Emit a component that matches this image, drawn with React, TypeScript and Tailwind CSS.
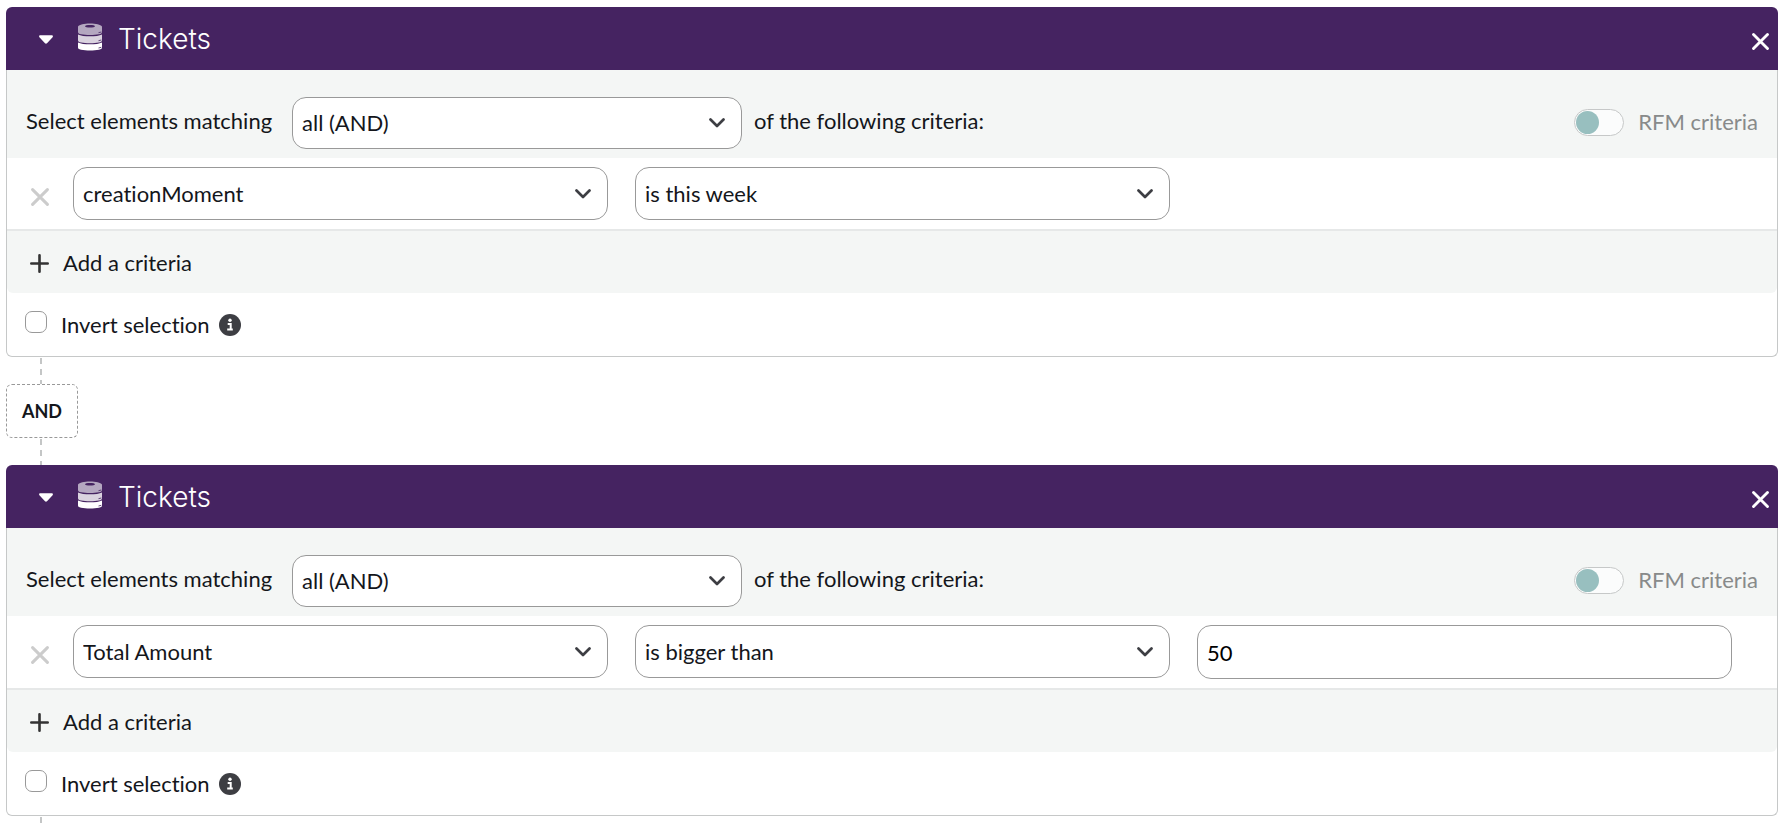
import { useId, useState } from "react";

type Option = { value: string; label: string };

type Criterion = {
  field: string;
  operator: string;
  value?: string;
};

const FIELDS: Option[] = [
  { value: "creationMoment", label: "creationMoment" },
  { value: "totalAmount", label: "Total Amount" },
];

const OPERATORS: Option[] = [
  { value: "thisWeek", label: "is this week" },
  { value: "biggerThan", label: "is bigger than" },
];

const MATCHING: Option[] = [
  { value: "and", label: "all (AND)" },
  { value: "or", label: "any (OR)" },
];

function CrossIcon({ className }: { className: string }) {
  return (
    <svg viewBox="0 0 18 18" className={className} fill="none" stroke="currentColor" strokeWidth="3" strokeLinecap="round" aria-hidden="true">
      <path d="M1.6 1.6 16.4 16.4M16.4 1.6 1.6 16.4" />
    </svg>
  );
}

function CaretIcon() {
  return (
    <svg viewBox="0 0 14 9" className="h-[9px] w-3.5" fill="currentColor" aria-hidden="true">
      <path d="M1.3.2h11.4c1.1 0 1.6 1.2.9 2L8 8.2c-.6.6-1.5.6-2 0L.4 2.2C-.3 1.4.2.2 1.3.2Z" />
    </svg>
  );
}

function DatabaseIcon() {
  return (
    <svg viewBox="0 0 24 28" className="h-7 w-6" fill="currentColor" aria-hidden="true">
      <path
        opacity=".6"
        fillRule="evenodd"
        d="M0 3.600C1.500 1.500 6 .6 12 .6s10.500.9 12 3V9c0 1.300-1 1.900-3 2.300-2.600.5-5.700.7-9 .7s-6.400-.2-9-.7C1 10.900 0 10.300 0 9V3.600ZM7 3.200c0 .8 2.200 1.300 5 1.300s5-.5 5-1.300-2.200-1.300-5-1.300-5 .5-5 1.300Z"
      />
      <path opacity=".8" d="M0 11.400c2.500 1.300 7 1.800 12 1.800s9.500-.5 12-1.800v5.800c0 1.300-1 1.900-3 2.300-2.600.5-5.700.7-9 .7s-6.400-.2-9-.7c-2-.4-3-1-3-2.300v-5.800Z" />
      <path d="M0 19.400c2.500 1.300 7 1.800 12 1.800s9.500-.5 12-1.800v5.200c0 1.200-1 1.800-3 2.200-2.600.5-5.700.7-9 .7s-6.400-.2-9-.7c-2-.4-3-1-3-2.200v-5.200Z" />
      <path d="M20.500 9.700 23.300 9M20.500 17.700l2.800-.7M20.500 25l2.800-.7" fill="none" stroke="#452361" strokeWidth=".8" />
    </svg>
  );
}

function ChevronIcon() {
  return (
    <svg viewBox="0 0 16 10" className="h-2.5 w-4" fill="none" stroke="currentColor" strokeWidth="2.7" strokeLinecap="round" strokeLinejoin="round" aria-hidden="true">
      <path d="M1.5 1.5 8 8l6.5-6.5" />
    </svg>
  );
}

function PlusIcon() {
  return (
    <svg viewBox="0 0 19 19" className="size-[19px]" fill="none" stroke="currentColor" strokeWidth="2.6" strokeLinecap="round" aria-hidden="true">
      <path d="M9.5 1.3v16.4M1.3 9.5h16.4" />
    </svg>
  );
}

function InfoIcon() {
  return (
    <svg viewBox="0 0 22 22" className="size-[22px]" aria-hidden="true">
      <circle cx="11" cy="11" r="11" fill="#3d3e43" />
      <circle cx="11" cy="6.3" r="1.7" fill="#fff" />
      <path d="M8.7 9.9h3v5.4M8.2 15.5h5.6" fill="none" stroke="#fff" strokeWidth="2" />
    </svg>
  );
}

function Select({ id, label, options, initial, size }: { id?: string; label?: string; options: Option[]; initial: string; size: string }) {
  return (
    <div className={"grid items-center " + size}>
      <select
        id={id}
        aria-label={label}
        defaultValue={initial}
        className="col-start-1 row-start-1 h-full w-full appearance-none rounded-[14px] border border-[#999] bg-white pr-12 pl-[9px]"
      >
        {options.map((option) => (
          <option key={option.value} value={option.value}>
            {option.label}
          </option>
        ))}
      </select>
      <span className="pointer-events-none col-start-1 row-start-1 mr-[17px] justify-self-end text-[#3d3e43]">
        <ChevronIcon />
      </span>
    </div>
  );
}

function CriterionRow({ criterion }: { criterion: Criterion }) {
  return (
    <div className="flex items-center border-b-2 border-[#e6e8e8] bg-white py-[9px] pr-[45px]">
      <button type="button" aria-label="Remove criteria" className="flex w-[66px] shrink-0 pt-1.5 pl-6 text-[#ccc]">
        <CrossIcon className="size-[18px]" />
      </button>
      <div className="grid flex-1 grid-cols-3 gap-[27px]">
        <Select label="Field" options={FIELDS} initial={criterion.field} size="h-[53px]" />
        <Select label="Operator" options={OPERATORS} initial={criterion.operator} size="h-[53px]" />
        {criterion.value !== undefined && (
          <input
            type="text"
            aria-label="Value"
            defaultValue={criterion.value}
            className="h-[54px] w-full min-w-0 rounded-[14px] border border-[#999] bg-white px-[9px] text-black"
          />
        )}
      </div>
    </div>
  );
}

function FilterCard({ title, criterion }: { title: string; criterion: Criterion }) {
  const id = useId();
  const [open, setOpen] = useState(true);
  return (
    <section className="text-[#14161b]">
      <header className="flex h-[63px] items-center rounded-t-md bg-[#452361] pr-[9px] pl-[33px] text-white">
        <button type="button" aria-label="Toggle section" aria-expanded={open} onClick={() => setOpen(!open)} className="flex pt-0.5">
          <CaretIcon />
        </button>
        <span className="mr-4 ml-[25px] pb-1">
          <DatabaseIcon />
        </span>
        <h2 className="font-['Inter'] text-[28px] leading-9 font-light">{title}</h2>
        <button type="button" aria-label="Remove section" className="ml-auto flex pt-1.5">
          <CrossIcon className="size-[17px]" />
        </button>
      </header>
      {open && (
        <div className="rounded-b-md border border-t-0 border-[#c6c8c8] bg-white">
          <div className="flex items-center bg-[#f4f6f5] pt-[27px] pr-[19px] pb-[9px] pl-[19px]">
            <label htmlFor={id + "match"} className="min-w-[254px] pb-1">
              Select elements matching
            </label>
            <Select id={id + "match"} options={MATCHING} initial="and" size="mx-3 h-[52px] w-[450px]" />
            <span className="pb-1">of the following criteria:</span>
            <label className="ml-auto flex items-center pb-0.5 text-[#888a8a]">
              <input
                type="checkbox"
                role="switch"
                className="mr-3.5 flex h-[27px] w-[50px] appearance-none items-center rounded-full border border-[#c6c8c8] bg-[#fbfcfc] px-px before:size-[23px] before:rounded-full before:bg-[#98bfbf] checked:justify-end"
              />
              <span>RFM criteria</span>
            </label>
          </div>
          <CriterionRow criterion={criterion} />
          <button type="button" className="flex h-[62px] w-full items-center gap-3.5 rounded-b-md bg-[#f4f6f5] pt-0.5 pl-[23px]">
            <span className="text-[#333]">
              <PlusIcon />
            </span>
            Add a criteria
          </button>
          <div className="flex h-[63px] items-center pl-[18px]">
            <input
              id={id + "invert"}
              type="checkbox"
              className="mr-3.5 mb-1.5 size-[22px] appearance-none rounded-[7px] border border-[#999] bg-white checked:bg-[#452361]"
            />
            <label htmlFor={id + "invert"}>Invert selection</label>
            <span className="ml-[9px]">
              <InfoIcon />
            </span>
          </div>
        </div>
      )}
    </section>
  );
}

function Connector() {
  return (
    <svg className="ml-[34px] block h-[27px] w-0.5" viewBox="0 0 2 27" aria-hidden="true">
      <path d="M1 0v27" stroke="#c4c6c6" strokeWidth="2" strokeDasharray="6 5" strokeDashoffset="-1" />
    </svg>
  );
}

export default function App() {
  return (
    <main className="h-screen overflow-hidden bg-white pt-[7px] pr-2 pl-1.5 font-['Lato',sans-serif] text-[22px] leading-7 [font-variant-ligatures:none]">
      <FilterCard title="Tickets" criterion={{ field: "creationMoment", operator: "thisWeek" }} />
      <Connector />
      <div className="flex h-[54px] w-[72px] items-center justify-center rounded-md border border-dashed border-[#999] text-[18px] font-bold text-[#14161b]">AND</div>
      <Connector />
      <FilterCard title="Tickets" criterion={{ field: "totalAmount", operator: "biggerThan", value: "50" }} />
      <Connector />
    </main>
  );
}
